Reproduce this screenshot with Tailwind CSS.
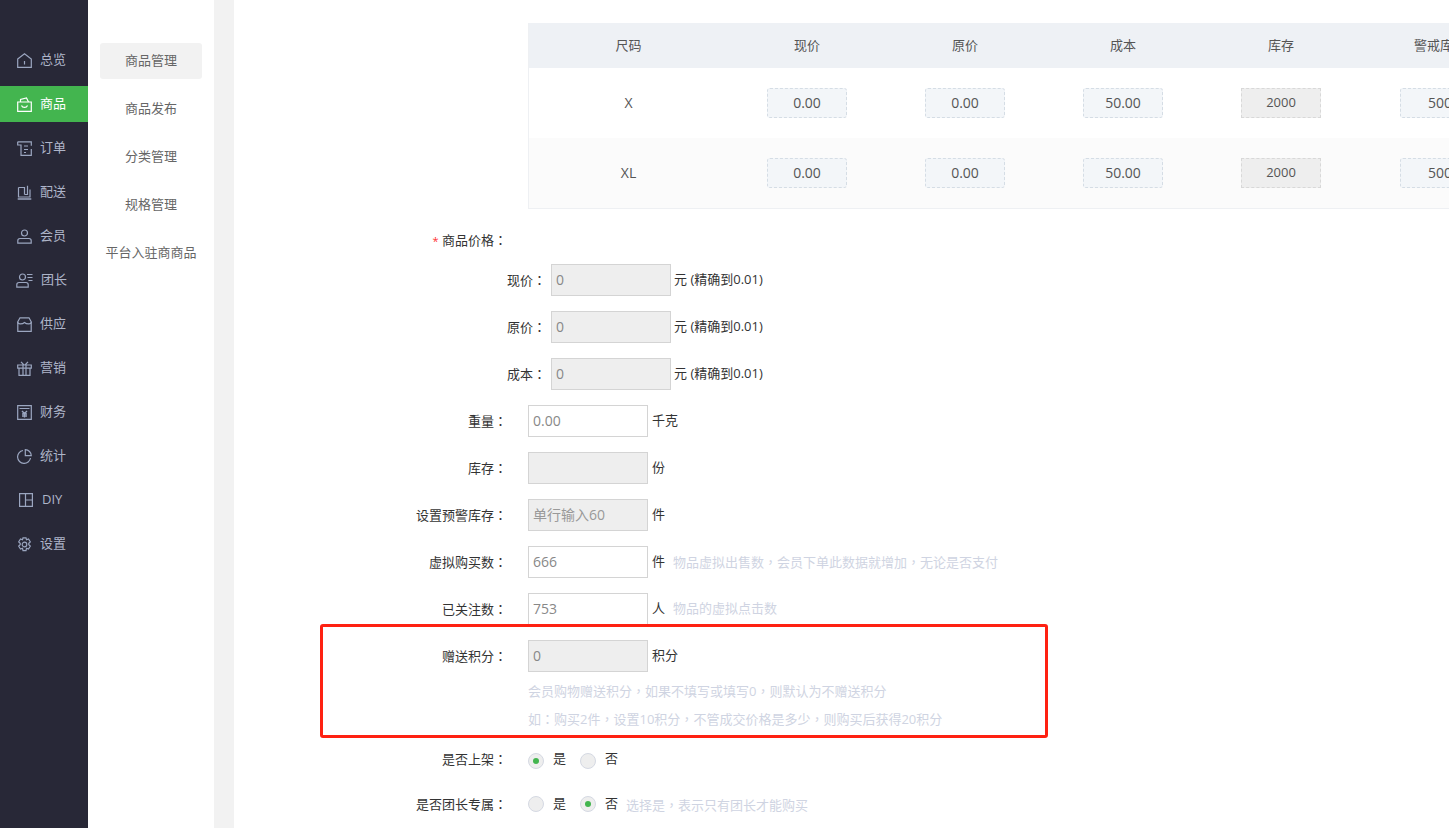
<!doctype html>
<html lang="zh">
<head>
<meta charset="utf-8">
<script src="https://cdn.jsdelivr.net/npm/@tailwindcss/browser@4"></script>
<title>商品</title>
</head>
<body class="h-[828px] w-[1449px] overflow-hidden bg-white font-['Open_Sans','Noto_Sans_CJK_SC',sans-serif] text-[13px] text-[#333]">
<div class="flex h-[828px]">
  <aside class="flex h-full w-[88px] shrink-0 flex-col bg-[#282837] pt-[42px] text-[13px] text-[#aeb5c9]">
    <a class="mb-[8px] flex h-[36px] items-center gap-[8px] pl-[17px]"><svg class="size-[15px]" viewBox="0 0 15 15" fill="none" stroke="#9ba6c0" stroke-width="1.2"><path d="M.7 6 7.500.8 14.300 6v8.300H.7Z"/><path d="M7.500 8v3.500"/></svg><span>总览</span></a>
    <a class="mb-[8px] flex h-[36px] items-center gap-[8px] bg-[#43b54f] pl-[17px] text-white"><svg class="size-[15px]" viewBox="0 0 15 15" fill="none" stroke="currentColor" stroke-width="1.2"><path d="M.7 5h13.600v9.300H.7Z"/><path d="M3.500 5V2.500L9.500 1l2 4"/><path d="M4.500 8.500c1 2.500 5 2.500 6 0"/></svg><span>商品</span></a>
    <a class="mb-[8px] flex h-[36px] items-center gap-[8px] pl-[17px]"><svg class="size-[15px]" viewBox="0 0 15 15" fill="none" stroke="#9ba6c0" stroke-width="1.2"><path d="M.7.8h13.600v4M.7.800V4H4v10.300h10.300V8"/><path d="M7 5h4M7 8.500h4M7 11.500h2"/></svg><span>订单</span></a>
    <a class="mb-[8px] flex h-[36px] items-center gap-[8px] pl-[17px]"><svg class="size-[15px]" viewBox="0 0 15 15" fill="none" stroke="#9ba6c0" stroke-width="1.2"><path d="M1.500 2.500V12H13V4.500"/><path d="M1.500 2.500h6V9.500"/><path d="M10.500.8V9.500h-3"/><path d="M.7 14h13.600" stroke-width="1.500"/></svg><span>配送</span></a>
    <a class="mb-[8px] flex h-[36px] items-center gap-[8px] pl-[17px]"><svg class="size-[15px]" viewBox="0 0 15 15" fill="none" stroke="#9ba6c0" stroke-width="1.2"><circle cx="7.500" cy="4" r="3"/><path d="M.8 14.200v-2.500C.8 10.200 2 9.500 3 9.500h9c1 0 2.200.7 2.200 2.200v2.500Z"/></svg><span>会员</span></a>
    <a class="mb-[8px] flex h-[36px] items-center gap-[8px] pl-[16px]"><svg class="size-[17px]" viewBox="0 0 17 15" fill="none" stroke="#9ba6c0" stroke-width="1.2"><circle cx="6.500" cy="4" r="3"/><path d="M.8 14.200v-2.500C.8 10.200 2 9.500 3 9.500h7c1 0 2.200.7 2.200 2.200v2.500Z"/><path d="M11 1.500h5.500M11.500 4.500h5M12.500 7.500h4"/></svg><span>团长</span></a>
    <a class="mb-[8px] flex h-[36px] items-center gap-[8px] pl-[17px]"><svg class="size-[15px]" viewBox="0 0 15 15" fill="none" stroke="#9ba6c0" stroke-width="1.2"><path d="M3 .8h9l2.300 4.200c0 2.500-4.500 2.500-6.800.5-2.300 2-6.800 2-6.800-.5Z"/><path d="M.8 5v9.300h13.400V5"/></svg><span>供应</span></a>
    <a class="mb-[8px] flex h-[36px] items-center gap-[8px] pl-[17px]"><svg class="size-[15px]" viewBox="0 0 15 15" fill="none" stroke="#9ba6c0" stroke-width="1.2"><path d="M.7 4h13.600v3.200H.7ZM2 7.200v7.100h11V7.200M6 4v10.300M9 4v10.300M7 4 4 .8M8 4l3-3.200"/></svg><span>营销</span></a>
    <a class="mb-[8px] flex h-[36px] items-center gap-[8px] pl-[17px]"><svg class="size-[15px]" viewBox="0 0 15 15" fill="none" stroke="#9ba6c0" stroke-width="1.2"><path d="M.7.700h13.600v13.600H.7ZM2.500 3.500h10"/><path d="M5 6l2.500 2.500L10 6M5 9h5M5 11h5M7.500 8.500V12.500" stroke-width="1.400"/></svg><span>财务</span></a>
    <a class="mb-[8px] flex h-[36px] items-center gap-[8px] pl-[17px]"><svg class="size-[15px]" viewBox="0 0 15 15" fill="none" stroke="#9ba6c0" stroke-width="1.2"><path d="M6 1.500a6.500 6.500 0 1 0 7.500 7.500"/><path d="M8.300.7a6 6 0 0 1 6 6h-6Z"/></svg><span>统计</span></a>
    <a class="mb-[8px] flex h-[36px] items-center gap-[9px] pl-[19px]"><svg class="size-[14px]" viewBox="0 0 14 14" fill="none" stroke="#9ba6c0" stroke-width="1.2"><path d="M.6.600h12.800v12.800H.6ZM6.500.6v12.800M6.500 7h6.900"/></svg><span>DIY</span></a>
    <a class="flex h-[36px] items-center gap-[8px] pl-[17px]"><svg class="size-[15px]" viewBox="0 0 15 15" fill="none" stroke="#9ba6c0" stroke-width="1.2"><path d="M6 .8h3l.5 2 2-.8 1.800 2.800-1.500 1.500v1.400l1.500 1.500-1.800 2.800-2-.8-.5 2.500H6l-.5-2.500-2 .8-1.800-2.800 1.500-1.500V6.300L1.700 4.800 3.500 2l2 .8Z"/><circle cx="7.500" cy="7.500" r="2.300"/></svg><span>设置</span></a>
  </aside>

  <nav class="flex h-full w-[126px] shrink-0 flex-col items-center bg-white pt-[43px] text-[13px] text-[#666] shadow-[1px_0_2px_rgba(0,0,0,0.06)]">
    <a class="mb-[12px] flex h-[36px] w-[102px] items-center justify-center rounded-[3px] bg-[#f2f2f2]">商品管理</a>
    <a class="mb-[12px] flex h-[36px] w-[102px] items-center justify-center">商品发布</a>
    <a class="mb-[12px] flex h-[36px] w-[102px] items-center justify-center">分类管理</a>
    <a class="mb-[12px] flex h-[36px] w-[102px] items-center justify-center">规格管理</a>
    <a class="flex h-[36px] w-[102px] items-center justify-center whitespace-nowrap">平台入驻商商品</a>
  </nav>

  <div class="w-[20px] shrink-0 bg-[#f2f2f2]"></div>

  <main class="relative h-full flex-1 overflow-hidden bg-white pt-[23px]">
    <div class="ml-[294px] w-[1000px] border-b border-l border-[#eef0f3] text-[#555]">
      <div class="flex h-[45px] items-center bg-[#eef1f5] text-center">
        <div class="w-[199px]">尺码</div><div class="w-[158px]">现价</div><div class="w-[158px]">原价</div><div class="w-[158px]">成本</div><div class="w-[158px]">库存</div><div class="w-[160px] whitespace-nowrap">警戒库存</div>
      </div>
      <div class="flex h-[70px] items-center text-center">
        <div class="w-[199px] pb-[2px] text-[14px]">X</div>
        <div class="flex w-[158px] justify-center"><div class="flex h-[30px] w-[80px] items-center justify-center rounded-[3px] border border-dashed border-[#d5dde5] bg-[#f3f6f9] pb-[2px] text-[14px]">0.00</div></div>
        <div class="flex w-[158px] justify-center"><div class="flex h-[30px] w-[80px] items-center justify-center rounded-[3px] border border-dashed border-[#d5dde5] bg-[#f3f6f9] pb-[2px] text-[14px]">0.00</div></div>
        <div class="flex w-[158px] justify-center"><div class="flex h-[30px] w-[80px] items-center justify-center rounded-[3px] border border-dashed border-[#d5dde5] bg-[#f3f6f9] pb-[2px] text-[14px]">50.00</div></div>
        <div class="flex w-[158px] justify-center"><div class="flex h-[30px] w-[80px] items-center justify-center border border-dashed border-[#d8d8d8] bg-[#eeeeee] text-[13px]">2000</div></div>
        <div class="flex w-[160px] justify-center"><div class="flex h-[30px] w-[80px] shrink-0 items-center justify-center rounded-[3px] border border-dashed border-[#d5dde5] bg-[#f3f6f9] pb-[2px] text-[14px]">500</div></div>
      </div>
      <div class="flex h-[70px] items-center bg-[#fbfbfb] text-center">
        <div class="w-[199px] pb-[2px] text-[14px]">XL</div>
        <div class="flex w-[158px] justify-center"><div class="flex h-[30px] w-[80px] items-center justify-center rounded-[3px] border border-dashed border-[#d5dde5] bg-[#f3f6f9] pb-[2px] text-[14px]">0.00</div></div>
        <div class="flex w-[158px] justify-center"><div class="flex h-[30px] w-[80px] items-center justify-center rounded-[3px] border border-dashed border-[#d5dde5] bg-[#f3f6f9] pb-[2px] text-[14px]">0.00</div></div>
        <div class="flex w-[158px] justify-center"><div class="flex h-[30px] w-[80px] items-center justify-center rounded-[3px] border border-dashed border-[#d5dde5] bg-[#f3f6f9] pb-[2px] text-[14px]">50.00</div></div>
        <div class="flex w-[158px] justify-center"><div class="flex h-[30px] w-[80px] items-center justify-center border border-dashed border-[#d8d8d8] bg-[#eeeeee] text-[13px]">2000</div></div>
        <div class="flex w-[160px] justify-center"><div class="flex h-[30px] w-[80px] shrink-0 items-center justify-center rounded-[3px] border border-dashed border-[#d5dde5] bg-[#f3f6f9] pb-[2px] text-[14px]">500</div></div>
      </div>
    </div>

    <div class="mt-[19px] flex h-[24px] items-center"><div class="w-[273px] text-right"><span class="text-[11px] text-[#f33]">*</span> 商品价格<span lang="zh-Hant" class="font-['Noto_Sans_CJK_TC']">：</span></div></div>

    <div class="mt-[12px] flex h-[32px] items-center"><div class="w-[312px] text-right">现价<span lang="zh-Hant" class="font-['Noto_Sans_CJK_TC']">：</span></div><input readonly value="0" class="ml-[5px] h-[32px] w-[120px] border border-[#d4d4d4] bg-[#eee] pb-[2px] pl-[4px] text-[14px] text-[#888] outline-none"><span class="ml-[3px]">元 (精确到0.01)</span></div>
    <div class="mt-[15px] flex h-[32px] items-center"><div class="w-[312px] text-right">原价<span lang="zh-Hant" class="font-['Noto_Sans_CJK_TC']">：</span></div><input readonly value="0" class="ml-[5px] h-[32px] w-[120px] border border-[#d4d4d4] bg-[#eee] pb-[2px] pl-[4px] text-[14px] text-[#888] outline-none"><span class="ml-[3px]">元 (精确到0.01)</span></div>
    <div class="mt-[15px] flex h-[32px] items-center"><div class="w-[312px] text-right">成本<span lang="zh-Hant" class="font-['Noto_Sans_CJK_TC']">：</span></div><input readonly value="0" class="ml-[5px] h-[32px] w-[120px] border border-[#d4d4d4] bg-[#eee] pb-[2px] pl-[4px] text-[14px] text-[#888] outline-none"><span class="ml-[3px]">元 (精确到0.01)</span></div>

    <div class="mt-[15px] flex h-[32px] items-center"><div class="w-[273px] text-right">重量<span lang="zh-Hant" class="font-['Noto_Sans_CJK_TC']">：</span></div><input readonly value="0.00" class="ml-[21px] h-[32px] w-[120px] border border-[#d4d4d4] bg-white pb-[2px] pl-[4px] text-[14px] text-[#888] outline-none"><span class="ml-[4px]">千克</span></div>
    <div class="mt-[15px] flex h-[32px] items-center"><div class="w-[273px] text-right">库存<span lang="zh-Hant" class="font-['Noto_Sans_CJK_TC']">：</span></div><input readonly class="ml-[21px] h-[32px] w-[120px] border border-[#d4d4d4] bg-[#eee] pb-[2px] pl-[4px] text-[14px] text-[#888] outline-none"><span class="ml-[4px]">份</span></div>
    <div class="mt-[15px] flex h-[32px] items-center"><div class="w-[273px] text-right">设置预警库存<span lang="zh-Hant" class="font-['Noto_Sans_CJK_TC']">：</span></div><input readonly value="单行输入60" class="ml-[21px] h-[32px] w-[120px] border border-[#d4d4d4] bg-[#eee] pb-[2px] pl-[4px] text-[14px] text-[#999] outline-none"><span class="ml-[4px]">件</span></div>
    <div class="mt-[15px] flex h-[32px] items-center"><div class="w-[273px] text-right">虚拟购买数<span lang="zh-Hant" class="font-['Noto_Sans_CJK_TC']">：</span></div><input readonly value="666" class="ml-[21px] h-[32px] w-[120px] border border-[#d4d4d4] bg-white pb-[2px] pl-[4px] text-[14px] text-[#888] outline-none"><span class="ml-[4px]">件</span><span class="ml-[8px] text-[#cfd4e2]">物品虚拟出售数<span lang="zh-Hant" class="font-['Noto_Sans_CJK_TC']">，</span>会员下单此数据就增加<span lang="zh-Hant" class="font-['Noto_Sans_CJK_TC']">，</span>无论是否支付</span></div>
    <div class="mt-[15px] flex h-[32px] items-center"><div class="w-[273px] text-right">已关注数<span lang="zh-Hant" class="font-['Noto_Sans_CJK_TC']">：</span></div><input readonly value="753" class="ml-[21px] h-[32px] w-[120px] border border-[#d4d4d4] bg-white pb-[2px] pl-[4px] text-[14px] text-[#888] outline-none"><span class="ml-[4px]">人</span><span class="ml-[8px] text-[#cfd4e2]">物品的虚拟点击数</span></div>
    <div class="mt-[15px] flex h-[32px] items-center"><div class="w-[273px] text-right">赠送积分<span lang="zh-Hant" class="font-['Noto_Sans_CJK_TC']">：</span></div><input readonly value="0" class="ml-[21px] h-[32px] w-[120px] border border-[#d4d4d4] bg-[#eee] pb-[2px] pl-[4px] text-[14px] text-[#888] outline-none"><span class="ml-[4px]">积分</span></div>
    <div class="mt-[5px] ml-[294px] h-[28px] leading-[28px] text-[#cfd4e2]">会员购物赠送积分<span lang="zh-Hant" class="font-['Noto_Sans_CJK_TC']">，</span>如果不填写或填写0<span lang="zh-Hant" class="font-['Noto_Sans_CJK_TC']">，</span>则默认为不赠送积分</div>
    <div class="ml-[294px] h-[28px] leading-[28px] text-[#cfd4e2]">如<span lang="zh-Hant" class="font-['Noto_Sans_CJK_TC']">：</span>购买2件<span lang="zh-Hant" class="font-['Noto_Sans_CJK_TC']">，</span>设置10积分<span lang="zh-Hant" class="font-['Noto_Sans_CJK_TC']">，</span>不管成交价格是多少<span lang="zh-Hant" class="font-['Noto_Sans_CJK_TC']">，</span>则购买后获得20积分</div>

    <div class="mt-[10px] flex h-[32px] items-center"><div class="w-[273px] text-right">是否上架<span lang="zh-Hant" class="font-['Noto_Sans_CJK_TC']">：</span></div>
      <span class="ml-[21px] flex size-[16px] translate-y-[2px] items-center justify-center rounded-full border border-[#d5d9e3] bg-[#eee]"><span class="size-[6px] rounded-full bg-[#43b54f]"></span></span><span class="ml-[9px]">是</span>
      <span class="ml-[14px] flex size-[16px] translate-y-[2px] rounded-full border border-[#d5d9e3] bg-[#eee]"></span><span class="ml-[9px]">否</span></div>
    <div class="mt-[13px] flex h-[32px] items-center"><div class="w-[273px] text-right">是否团长专属<span lang="zh-Hant" class="font-['Noto_Sans_CJK_TC']">：</span></div>
      <span class="ml-[21px] flex size-[16px] rounded-full border border-[#d5d9e3] bg-[#eee]"></span><span class="ml-[9px]">是</span>
      <span class="ml-[14px] flex size-[16px] items-center justify-center rounded-full border border-[#d5d9e3] bg-[#eee]"><span class="size-[6px] rounded-full bg-[#43b54f]"></span></span><span class="ml-[9px]">否</span>
      <span class="ml-[8px] translate-y-[1px] text-[#cfd4e2]">选择是<span lang="zh-Hant" class="font-['Noto_Sans_CJK_TC']">，</span>表示只有团长才能购买</span></div>

    <div class="absolute left-[86px] top-[624px] h-[114px] w-[728px] rounded-[3px] border-[3px] border-[#fe2112]"></div>
  </main>
</div>
</body>
</html>
